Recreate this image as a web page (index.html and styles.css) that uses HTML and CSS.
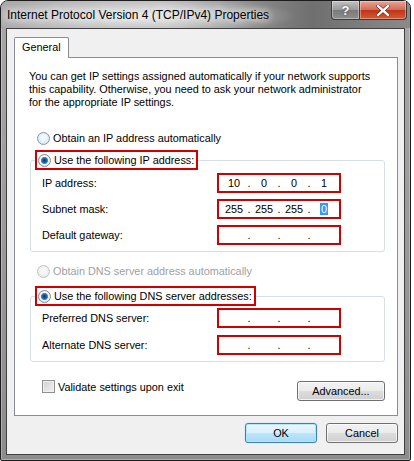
FILE: index.html
```html
<!DOCTYPE html>
<html lang="en">
<head>
  <meta charset="UTF-8" />
  <title>Internet Protocol Version 4 (TCP/IPv4) Properties</title>
  <link rel="stylesheet" href="styles.css">
</head>
<body>
  <div class="window">
    <div class="titlebar">
      <span class="title">Internet Protocol Version 4 (TCP/IPv4) Properties</span>
      <div class="caption-buttons">
        <span class="cap-btn help">?</span>
        <span class="cap-btn close">
          <svg width="14" height="11" viewBox="0 0 14 11">
            <path d="M2 1 L12 10 M12 1 L2 10" stroke="#5a1a10" stroke-width="3.6" stroke-linecap="square" />
            <path d="M2 1 L12 10 M12 1 L2 10" stroke="#fff" stroke-width="2.4" stroke-linecap="square" />
          </svg>
        </span>
      </div>
    </div>

    <div class="client">
      <div class="tabs">
        <span class="tab">General</span>
      </div>

      <div class="panel">
        <p class="intro">You can get IP settings assigned automatically if your network supports<br>this capability. Otherwise, you need to ask your network administrator<br>for the appropriate IP settings.</p>

        <label class="option first"><span class="radio"></span>Obtain an IP address automatically</label>

        <fieldset class="group">
          <legend class="option mark"><span class="radio checked"></span>Use the following IP address:</legend>
          <div class="field">
            <span class="field-label">IP address:</span>
            <span class="ip"><span class="seg">10</span><span class="dot">.</span><span class="seg">0</span><span class="dot">.</span><span class="seg">0</span><span class="dot">.</span><span class="seg">1</span></span>
          </div>
          <div class="field">
            <span class="field-label">Subnet mask:</span>
            <span class="ip"><span class="seg">255</span><span class="dot">.</span><span class="seg">255</span><span class="dot">.</span><span class="seg">255</span><span class="dot">.</span><span class="seg"><span class="sel">0</span></span></span>
          </div>
          <div class="field">
            <span class="field-label">Default gateway:</span>
            <span class="ip"><span class="seg"></span><span class="dot">.</span><span class="seg"></span><span class="dot">.</span><span class="seg"></span><span class="dot">.</span><span class="seg"></span></span>
          </div>
        </fieldset>

        <label class="option disabled"><span class="radio"></span>Obtain DNS server address automatically</label>

        <fieldset class="group dns">
          <legend class="option mark"><span class="radio checked"></span>Use the following DNS server addresses:</legend>
          <div class="field">
            <span class="field-label">Preferred DNS server:</span>
            <span class="ip"><span class="seg"></span><span class="dot">.</span><span class="seg"></span><span class="dot">.</span><span class="seg"></span><span class="dot">.</span><span class="seg"></span></span>
          </div>
          <div class="field">
            <span class="field-label">Alternate DNS server:</span>
            <span class="ip"><span class="seg"></span><span class="dot">.</span><span class="seg"></span><span class="dot">.</span><span class="seg"></span><span class="dot">.</span><span class="seg"></span></span>
          </div>
        </fieldset>

        <div class="panel-foot">
          <label class="check"><span class="checkbox"></span>Validate settings upon exit</label>
          <button class="btn advanced">Advanced...</button>
        </div>
      </div>

      <div class="dialog-buttons">
        <button class="btn default">OK</button>
        <button class="btn">Cancel</button>
      </div>
    </div>
  </div>
</body>
</html>
```

FILE: styles.css
```css
* {
  box-sizing: border-box;
}
body {
  margin: 0;
  background: #fff;
  font-family: "Liberation Sans", Arial, sans-serif;
  font-size: 10.85px;
  color: #000;
}
.window {
  width: 411px;
  height: 461px;
  border: 1px solid #1c1c1c;
  border-radius: 8px 8px 2px 2px;
  background: linear-gradient(#a8a8a8, #8c8c8c);
  box-shadow: inset 0 0 0 1px rgba(255,255,255,0.3);
  display: flex;
  flex-direction: column;
}
.titlebar {
  height: 27px;
  flex: none;
  display: flex;
  align-items: flex-start;
  padding: 0 3px 0 6px;
  border-radius: 7px 7px 0 0;
  background:
    radial-gradient(ellipse 160px 20px at 135px 15px, rgba(236,236,236,0.95), rgba(236,236,236,0) 100%),
    linear-gradient(to right, #a9a9a9, #b4b4b4 40%, #6f6f6f 76%, #8a8a8a 100%);
}
.title {
  font-size: 12px;
  line-height: 28px;
  color: #000;
  text-shadow: 0 0 6px #f2f2f2, 0 0 10px #f2f2f2;
}
.caption-buttons {
  margin-left: auto;
  display: flex;
}
.cap-btn {
  height: 19px;
  display: flex;
  align-items: center;
  justify-content: center;
  border: 1px solid #3d3d3d;
  border-top: none;
  box-shadow: inset 0 0 0 1px rgba(255,255,255,0.35);
}
.help {
  width: 28px;
  border-right: none;
  border-radius: 0 0 0 4px;
  background: linear-gradient(#c2c2c2, #9a9a9a 48%, #7a7a7a 52%, #8e8e8e);
  color: #fff;
  font-weight: bold;
  font-size: 13px;
  text-shadow: 0 0 2px #333;
}
.close {
  width: 48px;
  border-radius: 0 0 4px 0;
  background: linear-gradient(#e7a597, #d26c57 48%, #bf3518 52%, #d45a35);
}
.client {
  flex: 1;
  margin: 0 5px 5px;
  border: 1px solid #404040;
  background: #f0f0f0;
  padding: 8px 6px 0 7px;
  display: flex;
  flex-direction: column;
}
.tabs {
  display: flex;
}
.tab {
  position: relative;
  height: 21px;
  margin-bottom: -1px;
  padding: 0 7px;
  line-height: 18px;
  background: #fff;
  border: 1px solid #898c95;
  border-bottom: none;
  border-radius: 2px 2px 0 0;
}
.panel {
  background: #fff;
  border: 1px solid #898c95;
  padding: 12px 12px 14px 14px;
}
.intro {
  margin: 0;
  line-height: 13px;
}
.option {
  display: flex;
  align-items: center;
  height: 16px;
  margin-left: 8px;
}
.option.first {
  margin-top: 21px;
}
.option.disabled {
  margin-top: 11px;
  color: #a0a0a0;
}
.radio {
  width: 13px;
  height: 13px;
  margin-right: 3px;
  flex: none;
  border-radius: 50%;
  border: 1px solid #8497a8;
  background: radial-gradient(circle at 50% 45%, #f4faff 20%, #c6e0f2 100%);
}
.radio.checked {
  border-color: #7d8b98;
  background:
    radial-gradient(circle at 50% 50%, #0d3f6c 0, #1d5d94 2px, #4f97d0 3.3px, rgba(79,151,208,0) 3.9px),
    radial-gradient(circle at 50% 45%, #fbfbfb 30%, #d9dde0 100%);
}
.option.disabled .radio {
  border-color: #c2c2c2;
  background: radial-gradient(circle at 50% 45%, #f7f7f7 30%, #e0e0e0 100%);
}
.group {
  margin: 4px 0 0 1px;
  padding: 3px 0 6px 4px;
  border: 1px solid #d5dfe5;
  border-radius: 3px;
  min-width: 0;
}
.group.dns {
  margin-top: 7px;
  padding-top: 2px;
}
.mark {
  border: 2px solid #d10000;
}
.group legend {
  margin-left: 0;
  padding: 0 2px 0 1px;
  height: 20px;
}
.field {
  display: flex;
  align-items: center;
  height: 20px;
  padding-left: 7px;
  margin-bottom: 6px;
}
.dns .field {
  margin-bottom: 7px;
}
.field:last-child {
  margin-bottom: 0;
}
.field-label {
  width: 175px;
}
.ip {
  display: flex;
  align-items: center;
  width: 124px;
  height: 20px;
  padding-left: 3px;
  border: 2px solid #d10000;
  background: #fff;
}
.seg {
  width: 24px;
  text-align: center;
}
.dot {
  width: 6px;
  text-align: center;
}
.sel {
  background: #3399ff;
  color: #fff;
  padding: 0 1px;
}
.panel-foot {
  display: flex;
  align-items: flex-start;
  margin-top: 18px;
  padding-left: 13px;
}
.check {
  display: flex;
  align-items: center;
  height: 13px;
}
.checkbox {
  width: 13px;
  height: 13px;
  margin-right: 3px;
  border: 1px solid #8e8f8f;
  background: linear-gradient(135deg, #cfcfcf, #f4f4f4);
  box-shadow: inset 0 0 0 1px #f0f0f0;
}
.btn {
  height: 20px;
  padding: 0;
  font: inherit;
  color: #000;
  border: 1px solid #707070;
  border-radius: 3px;
  background: linear-gradient(#f2f2f2, #ebebeb 50%, #dddddd 50%, #cfcfcf);
  box-shadow: inset 0 0 0 1px rgba(255,255,255,0.7);
}
.advanced {
  width: 88px;
  margin: 1px 0 0 auto;
}
.dialog-buttons {
  display: flex;
  justify-content: flex-end;
  gap: 9px;
  margin-top: 7px;
}
.dialog-buttons .btn {
  width: 72px;
}
.btn.default {
  border-color: #3c7fb1;
  background: linear-gradient(#eaf6fd, #d9f0fc 50%, #bee6fd 50%, #a7d9f5);
  box-shadow: inset 0 0 0 1px #b6e6fb, 0 0 1px #6ec4f0;
}
```
